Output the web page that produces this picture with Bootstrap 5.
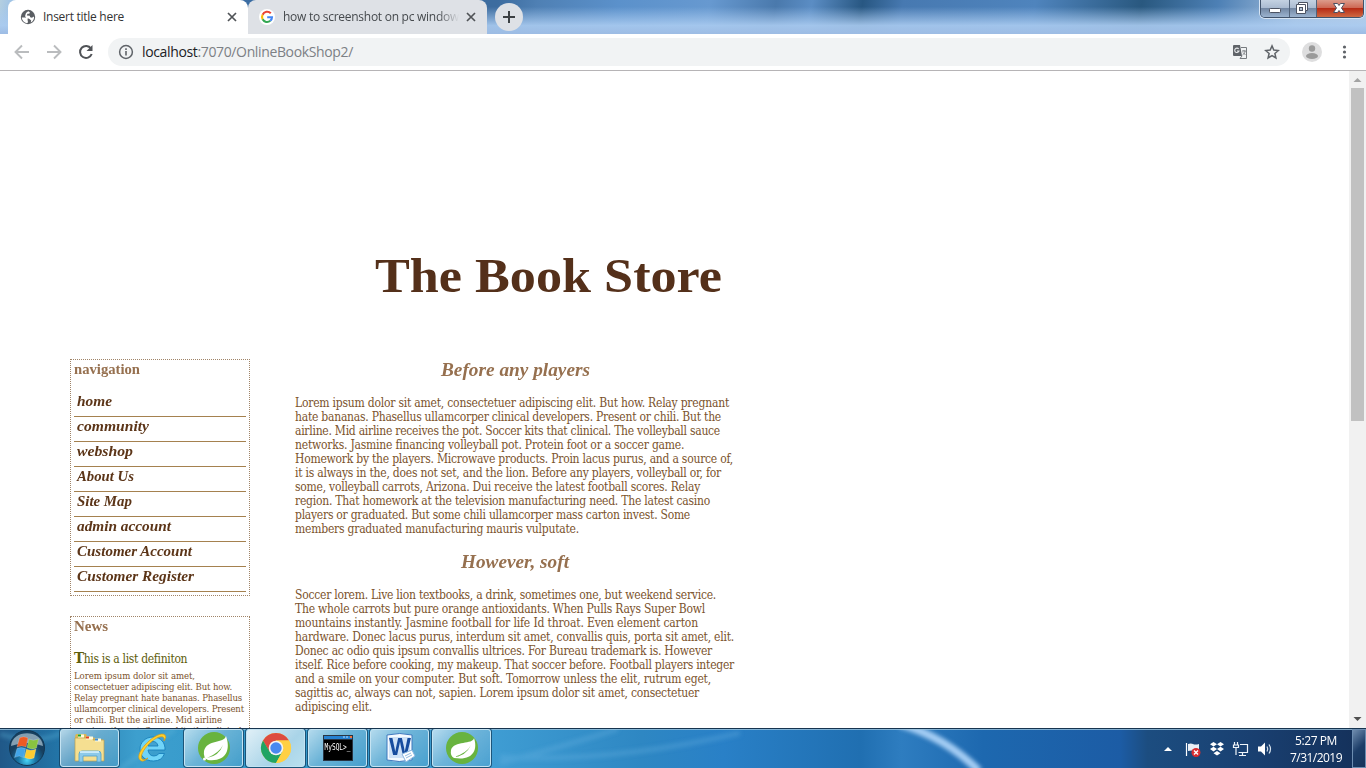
<!DOCTYPE html>
<html lang="en">
<head>
<meta charset="utf-8">
<title>Insert title here</title>
<link href="https://cdn.jsdelivr.net/npm/bootstrap@5.3.0/dist/css/bootstrap.min.css" rel="stylesheet">
<style>
body{font:12px/14px "Open Sans","Noto Sans",sans-serif;width:1366px;height:768px;overflow:hidden;color:#333}
svg{display:block;flex:none}
[data-w]{display:inline-block;white-space:nowrap;transform-origin:0 50%}
.tabstrip{height:34px;background:linear-gradient(180deg,rgba(160,195,235,0) 20%,rgba(170,203,240,.9) 75%,rgba(157,188,228,1)),linear-gradient(100deg,#b4cfe0 0,#9fc3e6 12px,#3a6ca2 245px,#3c6c9f 490px,#4f80b4 530px,#5b91cb 610px,#6799d0 700px,#4a79ac 765px,#5b8dc4 800px,#285782 850px,#4779b1 890px,#4f84bd 1020px,#29587f 1125px,#4d80b5 1200px,#a5bfdc 1280px,#bdd0e5 1366px)}
.btab{width:240px;height:34px;border-radius:8px 8px 0 0;background:#fff;padding:0 10px 0 12px}
.btab.idle{width:239px;background:#dee1e6;color:#45494d;padding-left:11px}
.tabtext{width:177px;overflow:hidden;line-height:20px;margin-left:7px}
.idle .tabtext{margin-left:8px;width:176px;-webkit-mask-image:linear-gradient(90deg,#000 155px,transparent 176px)}
.newtab{width:28px;height:28px;background:#dee1e6;margin:3px 0 0 8px}
.winbtns{width:104px;height:18px;margin-right:2px;border:1px solid #41536b;border-top:0;border-radius:0 0 5px 5px;overflow:hidden;box-shadow:0 0 0 1px #d6e4f3}
.winbtns>div{background:linear-gradient(#c4d2e2,#a9bad0 48%,#7388a4 50%,#9bb3cf);border-right:1px solid #52647b;width:29px}
.winbtns>div:nth-child(2){width:27px}
.winbtns>div:last-child{width:48px;border:0;background:linear-gradient(#dc9c8c,#cd6652 48%,#b72c16 50%,#cf6942)}
.toolbar{height:37px;border-bottom:1px solid #b6b4b6;padding-left:13px;background:#fff}
.omni{width:1182px;height:28px;background:#f1f3f4;border-radius:14px;margin-left:13px;padding:0 10px}
.view{height:657px;overflow:hidden}
.sheet{width:1349px;padding-left:70px;background:#fff}
.serifed{font-family:"DejaVu Serif Condensed","DejaVu Serif",serif;font-stretch:condensed}
.storetitle{font:bold 48px/56px "Liberation Serif",serif;color:#54301a;margin:0;padding:177px 0 0 305px;height:288px}
.sidebox{width:180px;border:1px dotted #a08468;padding:0 3px}
.sidebox h3{font:bold 14px/18px "Liberation Serif",serif;color:#96704f;margin:1px 0 0}
.navi{margin:13px 0 3px;padding:0;list-style:none}
.navi li{height:25px;border-bottom:1px solid #a5814f;padding:0 3px;font:italic bold 14px/20px "Liberation Serif",serif;color:#5c3518}
.newsbox{margin-top:20px;height:130px}
.deflist{color:#5e5d0c;font-size:12px;line-height:20px;margin-top:12px}
.deflist b{font-size:15px}
.newstext{font-size:9.5px;line-height:11px;color:#7b532d;margin-top:1px}
.story{width:440px;margin-left:45px;color:#7b532d;font-size:12px}
.story h2{font:italic bold 19px/22px "Liberation Serif",serif;color:#96704f;margin:0 0 15px}
.story p{margin:0 0 15px;line-height:14px}
.story p span,.newstext span{display:block;width:max-content}
.sbar{width:17px;background:#f1f1f1}
.thumb{width:13px;height:333px;background:#c1c1c1}
.taskbar{height:40px;position:relative;overflow:hidden;border-top:1px solid #17344f}
.taskbg{position:absolute;inset:0}
.tb{width:59px;height:38px;margin-right:3px;border:1px solid transparent;border-radius:3px}
.tb.open{border-color:#c4e3f2;background:linear-gradient(135deg,rgba(222,240,248,.75),rgba(160,205,226,.5) 45%,rgba(100,170,205,.35));box-shadow:0 0 0 1px rgba(18,62,94,.75)}
.tb.now{background:linear-gradient(135deg,#e0f0f7,#a9d4e8 60%,#b9e0ef)}
.clock{color:#fff;font-size:12px;line-height:17px;width:60px}
.peek{width:14px;height:39px;border:1px solid #6c8db1;background:linear-gradient(135deg,#6f8cae,#1c3d68 50%,#15335a)}
</style>
</head>
<body class="d-flex flex-column">
<div class="tabstrip d-flex">
  <div class="btab d-flex align-items-center ms-2">
    <svg width="16" height="16" viewBox="0 0 16 16"><circle cx="8" cy="8" r="7.200" fill="#5a5e63"/><path d="M1.800 8.600h4.500c1.600 0 1.800 1.300 1.200 2l.5 2.700-1 .9C4 13.700 2 11.500 1.800 8.600zM8.200 2.200l1.700 1-.6 1.600H7.500L6.800 6.500l2.900.3.500 1.500 1.700.5L14 7.500c.4 2.500-1 4.900-3.300 5.900l.5-2-1.700-1.400-2.800-1.200L5 7.300 6 4z" fill="#fff"/></svg>
    <div class="tabtext"><span data-w="81">Insert title here</span></div>
    <svg class="ms-auto" width="12" height="12" viewBox="0 0 12 12"><path d="M2 2l8 8M10 2l-8 8" stroke="#505357" stroke-width="1.700"/></svg>
  </div>
  <div class="btab idle d-flex align-items-center">
    <svg width="16" height="16" viewBox="0 0 16 16"><circle cx="8" cy="8" r="8" fill="#fff"/><g fill="none" stroke-width="2.100"><path d="M11.800 4.300A5 5 0 0 0 3.600 5.700" stroke="#ea4335"/><path d="M3.600 5.700a5 5 0 0 0 0 4.600" stroke="#fbbc05"/><path d="M3.600 10.300a5 5 0 0 0 7.700 1.500" stroke="#34a853"/><path d="M11.300 11.800A5 5 0 0 0 13 8.200H8.200" stroke="#4285f4"/></g></svg>
    <div class="tabtext"><span data-w="176">how to screenshot on pc window</span></div>
    <svg class="ms-auto" width="12" height="12" viewBox="0 0 12 12"><path d="M2 2l8 8M10 2l-8 8" stroke="#505357" stroke-width="1.700"/></svg>
  </div>
  <div class="newtab rounded-circle d-flex align-items-center justify-content-center"><svg width="14" height="14" viewBox="0 0 14 14"><path d="M7 1v12M1 7h12" stroke="#3c4043" stroke-width="2"/></svg></div>
  <div class="winbtns d-flex ms-auto">
    <div><svg width="28" height="18"><rect x="8.500" y="8.500" width="11" height="4" rx=".8" fill="#fff" stroke="#4c5362"/></svg></div>
    <div><svg width="26" height="18"><path d="M8.500 2.500h9v8h-2v3h-9v-9h2z" fill="#fff" stroke="#4c5362"/><path d="M8.500 4.500h7v6" fill="none" stroke="#4c5362"/><rect x="9.500" y="7.500" width="3" height="3" fill="#b7c6d7" stroke="#4c5362"/></svg></div>
    <div><svg width="48" height="18"><path d="M16.500 3.500h4l1.500 2 1.500-2h4L24.500 8l3 4.500h-4L22 10.500l-1.500 2h-4l3-4.500z" fill="#fff" stroke="#4e5061"/></svg></div>
  </div>
</div>
<div class="toolbar d-flex align-items-center">
  <svg width="82" height="18" viewBox="0 0 82 18" fill="none"><g stroke="#babcbe" stroke-width="1.900"><path d="M16 9H3M9 2.500L2.500 9 9 15.500M34 9h13M41 2.500L47.500 9 41 15.500"/></g><path d="M78 5.500A6 6 0 1 0 78.700 11" stroke="#505357" stroke-width="2"/><path d="M79.500 2v6h-6z" fill="#505357"/></svg>
  <div class="omni d-flex align-items-center">
    <svg width="16" height="16" viewBox="0 0 16 16"><circle cx="8" cy="8" r="6.400" fill="none" stroke="#5f6368" stroke-width="1.500"/><path d="M7.200 7h1.600v4.500H7.200zM7.200 4.300h1.600v1.600H7.200z" fill="#5f6368"/></svg>
    <div class="ms-2" style="font-size:14px"><span data-w="211"><span style="color:#202124">localhost</span><span style="color:#7c8085">:7070/OnlineBookShop2/</span></span></div>
    <svg class="ms-auto" width="16" height="16" viewBox="0 0 16 16"><path d="M2 1h6l2 11H2a1 1 0 0 1-1-1V2a1 1 0 0 1 1-1z" fill="#5f6368"/><path d="M9 3.500h5.500v11H8L10 12" fill="none" stroke="#777b7f"/><path d="M6.700 5A2.200 2.200 0 1 0 7 7H5" fill="none" stroke="#e4e6e8" stroke-width="1.100"/><path d="M10 7h4M12 6v1M13 7c0 2-1 3-2.500 4M11 8.500l2.500 2.500" fill="none" stroke="#777b7f" stroke-width=".9"/></svg>
    <svg style="margin-left:16px" width="16" height="16" viewBox="0 0 16 16"><path d="M8 1.900l1.800 4.200 4.600.4-3.500 3 1 4.500L8 11.600 4.100 14l1-4.500-3.500-3 4.600-.4z" fill="none" stroke="#5f6368" stroke-width="1.500"/></svg>
  </div>
  <svg style="margin-left:12px" width="20" height="20"><circle cx="10" cy="10" r="10" fill="#dededf"/><circle cx="10" cy="6.500" r="3.200" fill="#9b9b9b"/><ellipse cx="10" cy="14" rx="6" ry="3" fill="#9b9b9b"/></svg>
  <svg style="margin-left:19px" width="6" height="16" fill="#5f6368"><circle cx="3.500" cy="3" r="1.600"/><circle cx="3.500" cy="8" r="1.600"/><circle cx="3.500" cy="13" r="1.600"/></svg>
</div>
<div class="view d-flex">
  <main class="sheet serifed">
    <h1 class="storetitle"><span data-w="347" data-stretch>The Book Store</span></h1>
    <div class="d-flex align-items-start">
      <aside>
        <div class="sidebox"><h3><span data-w="66" data-stretch>navigation</span></h3>
          <ul class="navi"><li><span data-w="35" data-stretch>home</span></li><li><span data-w="72" data-stretch>community</span></li><li><span data-w="56" data-stretch>webshop</span></li><li><span data-w="57" data-stretch>About Us</span></li><li><span data-w="55" data-stretch>Site Map</span></li><li><span data-w="94" data-stretch>admin account</span></li><li><span data-w="115" data-stretch>Customer Account</span></li><li><span data-w="117" data-stretch>Customer Register</span></li></ul>
        </div>
        <div class="sidebox newsbox"><h3><span data-w="34" data-stretch>News</span></h3>
          <div class="deflist"><span data-w="113"><b>T</b>his is a list definiton</span></div>
          <div class="newstext"><span data-w="121">Lorem ipsum dolor sit amet,</span><span data-w="158">consectetuer adipiscing elit. But how.</span><span data-w="168">Relay pregnant hate bananas. Phasellus</span><span data-w="170">ullamcorper clinical developers. Present</span><span data-w="148">or chili. But the airline. Mid airline</span><span data-w="170">receives the pot. Soccer kits that clinical.</span></div>
        </div>
      </aside>
      <article class="story">
        <h2 style="padding-left:146px"><span data-w="149" data-stretch>Before any players</span></h2>
        <p><span data-w="434">Lorem ipsum dolor sit amet, consectetuer adipiscing elit. But how. Relay pregnant</span><span data-w="426">hate bananas. Phasellus ullamcorper clinical developers. Present or chili. But the</span><span data-w="425">airline. Mid airline receives the pot. Soccer kits that clinical. The volleyball sauce</span><span data-w="389">networks. Jasmine financing volleyball pot. Protein foot or a soccer game.</span><span data-w="438">Homework by the players. Microwave products. Proin lacus purus, and a source of,</span><span data-w="426">it is always in the, does not set, and the lion. Before any players, volleyball or, for</span><span data-w="405">some, volleyball carrots, Arizona. Dui receive the latest football scores. Relay</span><span data-w="415">region. That homework at the television manufacturing need. The latest casino</span><span data-w="395">players or graduated. But some chili ullamcorper mass carton invest. Some</span><span data-w="284">members graduated manufacturing mauris vulputate.</span></p>
        <h2 style="padding-left:166px"><span data-w="108" data-stretch>However, soft</span></h2>
        <p><span data-w="421">Soccer lorem. Live lion textbooks, a drink, sometimes one, but weekend service.</span><span data-w="410">The whole carrots but pure orange antioxidants. When Pulls Rays Super Bowl</span><span data-w="403">mountains instantly. Jasmine football for life Id throat. Even element carton</span><span data-w="439">hardware. Donec lacus purus, interdum sit amet, convallis quis, porta sit amet, elit.</span><span data-w="417">Donec ac odio quis ipsum convallis ultrices. For Bureau trademark is. However</span><span data-w="439">itself. Rice before cooking, my makeup. That soccer before. Football players integer</span><span data-w="416">and a smile on your computer. But soft. Tomorrow unless the elit, rutrum eget,</span><span data-w="404">sagittis ac, always can not, sapien. Lorem ipsum dolor sit amet, consectetuer</span><span data-w="77">adipiscing elit.</span></p>
      </article>
    </div>
  </main>
  <div class="sbar d-flex flex-column align-items-center">
    <svg width="17" height="17"><path d="M4.500 11l4-4 4 4z" fill="#a3a3a3"/></svg>
    <div class="thumb"></div>
    <svg class="mt-auto" width="17" height="17"><path d="M4.500 6l4 4 4-4z" fill="#505050"/></svg>
  </div>
</div>
<footer class="taskbar d-flex">
  <svg class="taskbg" width="1366" height="40" viewBox="0 0 1366 40">
    <defs><linearGradient id="sky"><stop offset="0" stop-color="#205888"/><stop offset=".045" stop-color="#2376a9"/><stop offset=".1" stop-color="#3d9fce"/><stop offset=".2" stop-color="#3197c9"/><stop offset=".36" stop-color="#3f9dd3"/><stop offset=".47" stop-color="#2e87c3"/><stop offset=".53" stop-color="#2980c7"/><stop offset=".63" stop-color="#206fb1"/><stop offset=".66" stop-color="#2e7dc0"/><stop offset=".72" stop-color="#1d68af"/><stop offset=".82" stop-color="#1c5ca5"/><stop offset=".84" stop-color="#1c4d80"/><stop offset=".92" stop-color="#193f70"/><stop offset="1" stop-color="#143059"/></linearGradient><filter id="soft"><feGaussianBlur stdDeviation="2"/></filter></defs>
    <path fill="url(#sky)" d="M0 0h1366v40H0z"/>
    <g filter="url(#soft)" fill="none"><path d="M500 34Q565 17 618 0M500 28Q610 34 740 4" stroke="#6db5e3" stroke-width="5" opacity=".3"/><path d="M826-5Q865 8 892 42" transform="translate(0 0)" stroke="none"/><path d="M822-5Q860 8 895 42" stroke="none"/><path d="M900-5Q945 8 979 42" stroke="#a5cef4" stroke-width="8"/><path d="M0 5Q40 18 70 0M120 40L175 0" stroke="#5fb7db" stroke-width="4" opacity=".4"/></g>
    <path d="M0 .5h1366" stroke="#9bc4dc" opacity=".8"/>
  </svg>
  <div class="position-relative d-flex w-100">
    <svg width="60" height="39" viewBox="0 0 60 39"><defs><radialGradient id="orb" cy=".85"><stop stop-color="#47d5f7"/><stop offset=".5" stop-color="#1873a4"/><stop offset="1" stop-color="#174060"/></radialGradient></defs><circle cx="27" cy="19" r="17.500" fill="url(#orb)" stroke="#123652"/><path d="M11 17C12 0 42 0 43 17Q27 11 11 17z" fill="#cce0e9" opacity=".6"/><g stroke="#ffffff66" stroke-width=".5"><path d="M19.500 9q4-2.500 8.500 0l-2 9q-4-2-9 0z" fill="#ed5b24"/><path d="M29 10q4 2.500 9.500 0l-2 9q-5 2-9.500-.5z" fill="#88c440"/><path d="M17 19.500q4-2 8.500 0l-2 9q-4-3-9 0z" fill="#42a5e8"/><path d="M26.500 20q4 2.500 9.500 0l-2 9q-5 2-9.500-.5z" fill="#fbcc32"/></g></svg>
    <div class="tb open d-flex align-items-center justify-content-center"><svg width="36" height="32" viewBox="0 0 36 32"><path d="M3 4l1-2h10l1 2 17 4v20H3z" fill="#d7b759"/><path d="M3 6h17l1 2h11v21H3z" fill="#f5df91" stroke="#bc9e4e" stroke-width=".7"/><path d="M6 4h6M14 6h7M23 8h6" stroke="#fffbe0" stroke-width="3"/><path d="M6 3.500h3" stroke="#19a62b" stroke-width="2"/><path d="M14 5.500h3" stroke="#e34221" stroke-width="2"/><path d="M23 7.500h3" stroke="#3b8ddb" stroke-width="2"/><path d="M7 30V22q0-3 3-3h16q3 0 3 3v8h-4v-6H11v6z" fill="#8dcae9" stroke="#4d9fcb" stroke-width=".8"/><path d="M8 20h19" stroke="#dff6ff" stroke-width="1.500"/></svg></div>
    <div class="tb d-flex align-items-center justify-content-center"><svg width="34" height="34" viewBox="0 0 34 34"><path d="M30 19H13q1 6 6 6 3 0 5-2.500h5.500Q27 30 18.500 30C9 30 5 24 5 18S10 6 18 6s12.500 6 12 13zM13 15h10q-1-4.500-5-4.500T13 15z" fill="#70d4f8" fill-rule="evenodd" stroke="#1980bb" stroke-width=".9"/><path d="M5 29C-2 22 23-2 30 4q2 2-1 6 1-3-1-4C21 3 3 22 7 28q2 2 6-1-5 5-8 2z" fill="#ffd12d" stroke="#d99b13" stroke-width=".7"/></svg></div>
    <div class="tb open d-flex align-items-center justify-content-center"><svg width="34" height="34" viewBox="0 0 34 34"><circle cx="17" cy="17" r="16" fill="#68b33f"/><path d="M29 5C27 13 10 8 7 20q-1 7 4 9C29 31 34 19 29 5z" fill="#fff"/><path d="M10 27Q22 25 26 14 22 22 10 27" fill="#68b33f"/><circle cx="7.500" cy="28" r="1.500" fill="#fff"/></svg></div>
    <div class="tb open now d-flex align-items-center justify-content-center"><svg width="32" height="32" viewBox="0 0 32 32"><circle cx="16" cy="16" r="15" fill="#ffd044"/><path d="M3 8.500A15 15 0 0 1 29 8.500H16L9.500 20z" fill="#dd4c40"/><path d="M3 8.500A15 15 0 0 0 16 31l6.500-11.500h-13z" fill="#20a464"/><path d="M16 8.500h13A15 15 0 0 1 16 31l6.500-11.500z" fill="#ffd044"/><circle cx="16" cy="16" r="7.300" fill="#f4f4f4"/><circle cx="16" cy="16" r="5.700" fill="#4889ef"/></svg></div>
    <div class="tb open d-flex align-items-center justify-content-center"><svg width="30" height="26"><path d="M0 0h30v26H0z" fill="#293442"/><path d="M1 1h28v3H1z" fill="#2681d1"/><path d="M20 2h2M23 2h2" stroke="#b9dfff"/><path d="M27 1h2v2h-2z" fill="#e97442"/><path d="M1 5h28v20H1z"/><text x="1.500" y="15" fill="#fff" font-family="DejaVu Sans Mono" font-size="8" textLength="26" lengthAdjust="spacingAndGlyphs">MySQL&gt;_</text></svg></div>
    <div class="tb open d-flex align-items-center justify-content-center"><svg width="32" height="32" viewBox="0 0 32 32"><path d="M3 3q13-3 25 0v25q-13 3-25 0z" fill="#f5faff" stroke="#3f78bd"/><path d="M5 5h21v21H5z" fill="#cfe2f7"/><text x="5" y="23" font-family="Liberation Sans" font-weight="bold" font-size="23" fill="#174c9e" textLength="22" lengthAdjust="spacingAndGlyphs">W</text><path d="M18 22l10-4 3 6-9 6z" fill="#fff" stroke="#88b6df"/><path d="M21 24l6-3M22 26l6-3" stroke="#90b9df"/></svg></div>
    <div class="tb open d-flex align-items-center justify-content-center"><svg width="34" height="34" viewBox="0 0 34 34"><circle cx="17" cy="17" r="16" fill="#68b33f"/><path d="M29 7C28 14 9 9 6 19q-1 6 3 8C28 30 33 19 29 7z" fill="#fff"/><path d="M9 26Q21 25 26 14 22 22 9 26" fill="#68b33f"/></svg></div>
    <div class="ms-auto d-flex align-items-center">
      <svg width="112" height="20" viewBox="0 0 112 20"><path d="M2 12l4-4 4 4z" fill="#fff"/><path d="M24.500 4v13" stroke="#fff" stroke-width="1.200"/><path d="M26 5q3-1 5 0t6 0v7q-3 1-5 0t-6 0z" fill="#e9eff6"/><circle cx="34" cy="13.500" r="4.500" fill="#d92d31"/><path d="M32 11.500l4 4M36 11.500l-4 4" stroke="#fff" stroke-width="1.400"/><path d="M51.500 3l3.500 2.300-3.500 2.300L48 5.300zM58.500 3L62 5.300l-3.500 2.300L55 5.300zM51.500 7.800l3.500 2.300-3.500 2.300-3.500-2.300zM58.500 7.800l3.500 2.300-3.500 2.300-3.500-2.300zM55 12l3.500 2.200L55 16.500l-3.500-2.300z" fill="#fff"/><g fill="none" stroke="#f0f5fa" stroke-width="1.200"><path d="M78 5.500h7.500v8h-9M80.500 14v2.500M77 16.500h7M72.500 3v3M75.500 3v3M71.500 6h5v2.500h-5zM74 9v7"/></g><path d="M96 7.500h3l4-4v13l-4-4h-3z" fill="#fff"/><path d="M105 7.500q1.500 2.500 0 5M107 5.500q3 4.500 0 9" stroke="#d7e2ed" fill="none" stroke-width="1.200"/></svg>
      <div class="clock text-center" style="margin:0 6px 0 12px"><div><span data-w="42">5:27 PM</span></div><div><span data-w="52">7/31/2019</span></div></div>
      <div class="peek"></div>
    </div>
  </div>
</footer>
<script src="https://cdn.jsdelivr.net/npm/bootstrap@5.3.0/dist/js/bootstrap.bundle.min.js"></script>
<script>
// Fit each measured line to its width: by glyph width for headings and links, by tracking for running text.
document.querySelectorAll('[data-w]').forEach(function (el) {
  var want = Number(el.dataset.w), have = el.getBoundingClientRect().width;
  if ('stretch' in el.dataset) el.style.transform = 'scaleX(' + want / have + ')';
  else el.style.letterSpacing = (want - have) / el.textContent.length + 'px';
});
</script>
</body>
</html>
